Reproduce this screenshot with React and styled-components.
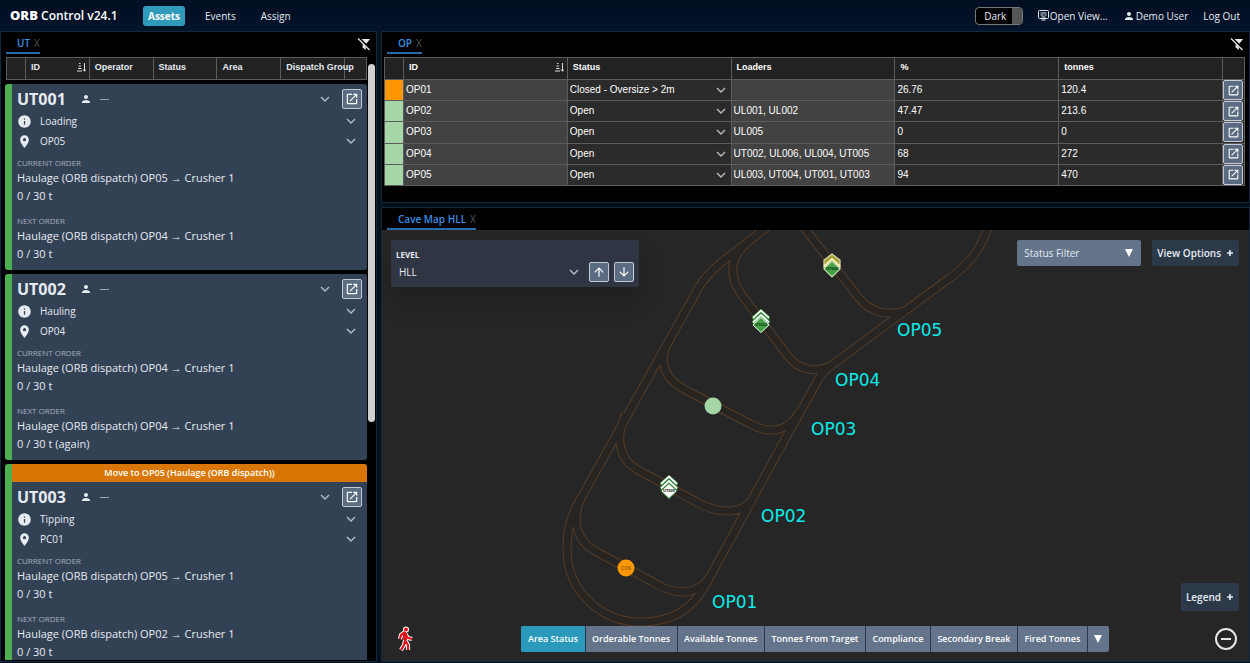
import React from 'react';
import styled, { createGlobalStyle, css } from 'styled-components';
import {
  MdPerson,
  MdInfo,
  MdLocationOn,
  MdOpenInNew,
  MdArrowUpward,
  MdArrowDownward,
} from 'react-icons/md';

const ui = '"Open Sans", "Noto Sans", sans-serif';
const grid = '"Liberation Sans", Arial, sans-serif';

const Global = createGlobalStyle`
  *, *::before, *::after { box-sizing: border-box; }
  body { margin: 0; background: #04101c; color: #e6ebf2; font: 10px/16px ${ui}; }
  button, select, input { font: inherit; color: inherit; margin: 0; }
  h2, h3, p { margin: 0; font: inherit; }
  svg { display: block; flex: none; }
`;

const Shell = styled.div`
  height: 100vh;
  display: flex;
  flex-direction: column;
  overflow: hidden;
`;

const TopBar = styled.header`
  flex: 0 0 31px;
  display: flex;
  align-items: center;
  padding: 0 10px;
  background: linear-gradient(#020e22, #03142b);
`;

const Brand = styled.div`
  font-size: 12px;
  font-weight: 600;
  width: 133px;
  white-space: nowrap;
  color: #fff;
  b { font-weight: 800; font-size: 13px; }
`;

const Nav = styled.nav`
  display: flex;
  flex: 1;
  gap: 15px;
`;

const NavLink = styled.a`
  padding: 0 5px;
  line-height: 20px;
  border-radius: 3px;
  text-decoration: none;
  color: #e6ebf2;
  ${(p) => p.$active && css`
    background: #2f9aba;
    color: #fff;
    font-weight: 700;
  `}
`;

const Account = styled.div`
  display: flex;
  align-items: center;
  gap: 15px;
`;

const TextButton = styled.button`
  display: flex;
  align-items: center;
  gap: 1px;
  padding: 0;
  border: 0;
  background: none;
  white-space: nowrap;
`;

const ThemeSwitch = styled.button`
  display: flex;
  width: 48px;
  height: 18px;
  padding: 0;
  overflow: hidden;
  border: 1px solid #777;
  border-radius: 4px;
  background: #000;
  line-height: 16px;
  span { flex: 1; padding-left: 3px; }
  i { width: 10px; background: #555; }
`;

const Workspace = styled.main`
  flex: 1;
  min-height: 0;
  display: grid;
  grid-template-columns: 377fr 869fr;
  gap: 4px;
  padding-bottom: 1px;
`;

const Column = styled.div`
  min-width: 0;
  min-height: 0;
  display: flex;
  flex-direction: column;
  gap: 4px;
`;

const Panel = styled.section`
  display: flex;
  flex-direction: column;
  min-height: 0;
  background: #000;
  border: 1px solid #12293d;
  ${(p) => p.$grow && 'flex: 1;'}
`;

const TabBar = styled.div`
  display: flex;
  flex: 0 0 22px;
  justify-content: space-between;
  align-items: flex-start;
  padding: 0 5px;
`;

const Tab = styled.div`
  display: flex;
  align-items: center;
  gap: 4px;
  height: 22px;
  padding: 1px 0 0 11px;
  font-weight: 600;
  color: #3b8fe0;
  border-bottom: 2px solid #2b6ca8;
`;

const CloseTab = styled.button`
  padding: 0;
  border: 0;
  background: none;
  font-weight: 400;
  color: #555;
`;

const IconButton = styled.button`
  display: flex;
  padding: 0;
  border: 0;
  background: none;
  margin-top: ${(p) => p.$top || 0}px;
  color: #e8e8e8;
`;

const OpenButton = styled.button`
  display: flex;
  align-items: center;
  justify-content: center;
  width: 20px;
  height: 20px;
  padding: 0;
  border: 1px solid #c3ccd8;
  border-radius: 2px;
  background: #5b6b82;
  color: #fff;
`;

const HeadTable = styled.table`
  width: 361px;
  max-width: 100%;
  margin-left: 1px;
  flex: none;
  table-layout: fixed;
  border-collapse: collapse;
  font: 700 9px/12px ${grid};
  background: #222;
  th {
    height: 22px;
    padding: 0 0 3px 5px;
    text-align: left;
    border: 1px solid #5c5c5c;
    white-space: nowrap;
  }
`;

const HeadLabel = styled.div`
  display: flex;
  justify-content: space-between;
  align-items: center;
  padding-right: 3px;
`;

const AssetBody = styled.div`
  display: flex;
  flex: 1;
  min-height: 0;
  padding: 3px 0 1px 4px;
`;

const AssetList = styled.div`
  flex: 1;
  min-width: 0;
  display: flex;
  flex-direction: column;
  gap: 4px;
  overflow: hidden;
`;

const ScrollTrack = styled.div`
  width: 9px;
  padding: 7px 1px 0;
  flex: none;
  &::before {
    content: '';
    display: block;
    height: 60%;
    border-radius: 4px;
    background: #d2d0cf;
  }
`;

const Card = styled.article`
  flex: none;
  border-left: 7px solid #4caf50;
  border-radius: 3px;
  background: #334155;
  overflow: hidden;
`;

const Banner = styled.div`
  background: #d97706;
  color: #fff;
  font-size: 9px;
  font-weight: 600;
  line-height: 18px;
  text-align: center;
`;

const CardBody = styled.div`
  padding: 5px 5px 7px;
`;

const CardHead = styled.div`
  display: grid;
  grid-template-columns: 63px 1fr auto auto;
  align-items: center;
  height: 20px;
  margin-bottom: 2px;
  h2 { font-size: 16px; font-weight: 700; line-height: 20px; }
  ${OpenButton} { margin-left: 12px; }
`;

const Operator = styled.span`
  display: flex;
  align-items: center;
  gap: 8px;
  color: #e6ebf2;
  i { width: 9px; height: 1px; background: #9aa5b4; }
`;

const Field = styled.div`
  display: flex;
  align-items: center;
  height: 20px;
  padding: 0 6px 0 0;
  span { flex: 1; padding-left: 8px; }
`;

const Order = styled.section`
  padding-top: ${(p) => p.$gap}px;
  h3 { font-size: 8px; line-height: 13px; color: #a3aebd; }
  p { font-size: 11px; line-height: 18px; white-space: nowrap; }
`;

const OpTable = styled.table`
  width: 100%;
  height: 129px;
  table-layout: fixed;
  border-collapse: collapse;
  font: 10px/12px ${grid};
  color: #fff;
  th, td { border: 1px solid #5c5c5c; padding: 0 0 0 2px; text-align: left; }
  th { height: 22px; background: #222; font-size: 9px; padding: 0 0 3px 5px; }
  td { background: #2b2b2b; white-space: nowrap; }
  td:nth-child(2), td:nth-child(4) { background: #424242; }
  td:last-child { padding: 0; }
`;

const Swatch = styled.td`
  && { background: ${(p) => p.$c}; }
`;

const SelectWrap = styled.div`
  display: flex;
  align-items: center;
  padding-right: 5px;
  select {
    flex: 1;
    min-width: 0;
    appearance: none;
    border: 0;
    padding: 0;
    background: none;
    outline: 0;
  }
`;

const OpBody = styled.div`
  padding: 3px 4px 16px 2px;
`;

const MapArea = styled.div`
  position: relative;
  flex: 1;
  min-height: 0;
  background: #262626;
  overflow: hidden;
`;

const Drawing = styled.svg`
  width: 100%;
  height: 100%;
`;

const Overlay = styled.div`
  position: absolute;
  inset: 0;
  display: flex;
  flex-direction: column;
  justify-content: space-between;
  padding: 10px 10px 9px 9px;
`;

const OverlayRow = styled.div`
  display: flex;
  align-items: flex-start;
  justify-content: ${(p) => (p.$end ? 'flex-end' : 'space-between')};
`;

const LevelBox = styled.div`
  display: flex;
  align-items: flex-end;
  gap: 5px;
  width: 248px;
  height: 47px;
  padding: 5px;
  border-radius: 2px;
  background: #2f3542;
  box-shadow: 0 14px 24px rgba(0, 0, 0, 0.2);
  > div { flex: 1; }
`;

const LevelLabel = styled.label`
  display: block;
  font-size: 8px;
  font-weight: 700;
  line-height: 14px;
`;

const LevelSelect = styled(SelectWrap)`
  height: 20px;
  padding-left: 3px;
`;

const Tools = styled.div`
  display: flex;
  gap: 11px;
`;

const FilterButton = styled.button`
  display: flex;
  justify-content: space-between;
  align-items: center;
  width: 124px;
  height: 26px;
  padding: 0 8px 0 7px;
  border: 0;
  border-radius: 2px;
  background: #64748b;
`;

const DarkButton = styled.button`
  display: flex;
  align-items: center;
  gap: 5px;
  height: ${(p) => p.$h}px;
  padding: 0 5px;
  border: 0;
  border-radius: 2px;
  background: #2c3949;
  font-weight: 600;
  white-space: nowrap;
`;

const Modes = styled.div`
  display: flex;
  border-radius: 2px;
  overflow: hidden;
`;

const Mode = styled.button`
  height: 26px;
  padding: 0 7px 0 6px;
  border: 0;
  border-left: 1px solid ${(p) => (p.$on ? '#2b9aba' : '#26384f')};
  background: ${(p) => (p.$on ? '#2b9aba' : '#64748b')};
  color: #fff;
  font-size: 9px;
  font-weight: 600;
  white-space: nowrap;
`;

const BottomRow = styled.div`
  display: grid;
  grid-template-columns: 124px 1fr auto;
  align-items: center;
  margin-top: 15px;
  padding: 0 2px 0 6px;
  ${Modes} { justify-self: start; }
`;

const Chevron = () => (
  <svg width="10" height="6" viewBox="0 0 10 6" fill="none" stroke="#b4bcc7" strokeWidth="1.4">
    <path d="M1 1l4 4 4-4" />
  </svg>
);

const SortIcon = () => (
  <svg width="9" height="9" viewBox="0 0 9 9" fill="none" stroke="#ddd" strokeWidth="1">
    <path d="M2 .5h1.500M1.500 3h2.500M1 5.500h3.500M0 8h5M7.500 0v8M6 6.500l1.500 1.800L9 6.500" />
  </svg>
);

const Triangle = () => (
  <svg width="8" height="8" viewBox="0 0 8 8" fill="#fff"><path d="M0 0h8L4 8z" /></svg>
);

const Plus = () => (
  <svg width="8" height="8" viewBox="0 0 8 8" stroke="#e6ebf2" strokeWidth="1.600"><path d="M4 1v6M1 4h6" /></svg>
);

const FilterOff = () => (
  <svg width="14" height="14" viewBox="0 0 14 14">
    <path d="M4.500 2H13L9.300 6.800z" fill="#e8e8e8" />
    <path d="M5.600 7L8.800 10.200V13L5.600 10.500z" fill="#e8e8e8" />
    <path d="M1 1.500l11.500 11.500" stroke="#e8e8e8" strokeWidth="1.300" />
  </svg>
);

const ViewIcon = () => (
  <svg width="11" height="11" viewBox="0 0 11 11" fill="none" stroke="#e6ebf2">
    <rect x=".5" y=".5" width="10" height="8" rx="1" />
    <path d="M2.500 3h6M2.500 5h3M6.500 5h2M3.500 7h4M3.500 10h4" />
  </svg>
);

const Walker = () => {
  const body = 'M8 6L4 9L3 13M8 6L8 15L7 19L4 24M8 14L11 19V24M8.500 8L11 12L15 13';
  return (
    <svg width="18" height="26" viewBox="0 0 18 26" fill="none" strokeLinejoin="round">
      <circle cx="9" cy="3.500" r="3" fill="#fff" />
      <path d={body} stroke="#fff" strokeWidth="4.200" />
      <circle cx="9" cy="3.500" r="2" fill="#e0101c" />
      <path d={body} stroke="#e0101c" strokeWidth="2.200" />
      <path d="M8 7v7" stroke="#e0101c" strokeWidth="4" />
    </svg>
  );
};

const assets = [
  { id: 'UT001', status: 'Loading', place: 'OP05', orders: [['OP05', '0 / 30 t'], ['OP04', '0 / 30 t']] },
  { id: 'UT002', status: 'Hauling', place: 'OP04', orders: [['OP04', '0 / 30 t'], ['OP04', '0 / 30 t (again)']] },
  { id: 'UT003', status: 'Tipping', place: 'PC01', banner: 'Move to OP05 (Haulage (ORB dispatch))', orders: [['OP05', '0 / 30 t'], ['OP02', '0 / 30 t']] },
];

const points = [
  ['OP01', 'Closed - Oversize > 2m', '', '26.76', '120.4'],
  ['OP02', 'Open', 'UL001, UL002', '47.47', '213.6'],
  ['OP03', 'Open', 'UL005', '0', '0'],
  ['OP04', 'Open', 'UT002, UL006, UL004, UT005', '68', '272'],
  ['OP05', 'Open', 'UL003, UT004, UT001, UT003', '94', '470'],
];

const modes = ['Area Status', 'Orderable Tonnes', 'Available Tonnes', 'Tonnes From Target', 'Compliance', 'Secondary Break', 'Fired Tonnes'];

const roads = [
  'M780 218L763 230L722 262Q702 278 694 296L580 500C568 520 567 535 567 552C568 590 600 622 640 622C670 622 690 612 705 586L784 441L817 382Q820 374 832 365L943 283C966 267 980 254 990 222',
  'M582 496C570 520 577 542 597 552L662 587C680 595 698 594 709 578',
  'M626 414C614 440 620 460 638 470L702 505C722 514 744 514 753 498',
  'M670 339C659 356 661 376 682 388L752 425C772 435 790 430 799 412',
  'M748 242C728 258 730 278 741 294L788 356C799 370 815 374 832 365',
  'M798 220L859 298C870 313 890 316 904 311',
];

const labels = [
  ['OP01', 712, 608], ['OP02', 761, 522], ['OP03', 811, 435], ['OP04', 835, 386], ['OP05', 897, 336],
];

const tones = {
  green: { back: '#2e7d32', body: '#43a047', edge: '#e8f5e9', chevron: '#f1fff1', ink: '#0d3b12' },
  white: { back: '#2e7d32', body: '#ffffff', edge: '#2e7d32', chevron: '#ffffff', ink: '#111111' },
  mixed: { back: '#a3a03c', body: '#43a047', edge: '#c8e6c9', chevron: '#fdf6c0', ink: '#0d3b12' },
};

function Truck({ x, y, tone, text }) {
  const t = tones[tone];
  return (
    <g transform={`translate(${x} ${y})`}>
      {tone === 'mixed'
        ? <path d="M0-11L8-5V4L0 12L-8 4V-5z" fill={t.back} stroke="#dcd7a8" strokeWidth="1.200" />
        : <path d="M0-12L8.500-5V4L0 12L-8.500 4V-5z" fill={t.back} />}
      {tone !== 'mixed' && <path d="M-8-3L0-10.500L8-3" fill="none" stroke={t.chevron} strokeWidth="1.800" />}
      <path d="M-8 1.500L0-6L8 1.500" fill="none" stroke={t.chevron} strokeWidth="2" />
      <path d="M0-3.500L8 4L0 11.500L-8 4z" fill={t.body} stroke={t.edge} strokeWidth="1" />
      <text y="5" textAnchor="middle" fontSize="4" fontWeight="700" fill={t.ink}>{text}</text>
    </g>
  );
}

function AssetCard({ asset }) {
  return (
    <Card>
      {asset.banner && <Banner>{asset.banner}</Banner>}
      <CardBody>
        <CardHead>
          <h2>{asset.id}</h2>
          <Operator><MdPerson size={12} /><i /></Operator>
          <Chevron />
          <OpenButton aria-label={`Open ${asset.id}`}><MdOpenInNew size={14} /></OpenButton>
        </CardHead>
        <Field><MdInfo size={15} /><span>{asset.status}</span><Chevron /></Field>
        <Field><MdLocationOn size={15} /><span>{asset.place}</span><Chevron /></Field>
        {asset.orders.map(([from, amount], i) => (
          <Order key={i} $gap={i ? 9 : 5}>
            <h3>{i ? 'NEXT ORDER' : 'CURRENT ORDER'}</h3>
            <p>Haulage (ORB dispatch) {from} → Crusher 1</p>
            <p>{amount}</p>
          </Order>
        ))}
      </CardBody>
    </Card>
  );
}

function GridColumns() {
  return (
    <colgroup>
      <col width="19" /><col /><col /><col /><col /><col /><col width="22" />
    </colgroup>
  );
}

export default function App() {
  return (
    <Shell>
      <Global />
      <TopBar>
        <Brand><b>ORB</b> Control v24.1</Brand>
        <Nav>
          <NavLink href="#assets" $active>Assets</NavLink>
          <NavLink href="#events">Events</NavLink>
          <NavLink href="#assign">Assign</NavLink>
        </Nav>
        <Account>
          <ThemeSwitch><span>Dark</span><i /></ThemeSwitch>
          <TextButton><ViewIcon />Open View...</TextButton>
          <TextButton><MdPerson size={12} />Demo User</TextButton>
          <TextButton>Log Out</TextButton>
        </Account>
      </TopBar>
      <Workspace>
        <Column>
          <Panel $grow>
            <TabBar>
              <Tab>UT<CloseTab aria-label="Close UT">X</CloseTab></Tab>
              <IconButton $top={5} aria-label="Clear filters"><FilterOff /></IconButton>
            </TabBar>
            <AssetBody>
              <AssetList>
                <HeadTable>
                  <GridColumns />
                  <thead>
                    <tr>
                      <th />
                      <th><HeadLabel>ID<SortIcon /></HeadLabel></th>
                      <th>Operator</th><th>Status</th><th>Area</th><th>Dispatch Group</th><th />
                    </tr>
                  </thead>
                </HeadTable>
                {assets.map((a) => <AssetCard key={a.id} asset={a} />)}
              </AssetList>
              <ScrollTrack />
            </AssetBody>
          </Panel>
        </Column>
        <Column>
          <Panel>
            <TabBar>
              <Tab>OP<CloseTab aria-label="Close OP">X</CloseTab></Tab>
              <IconButton $top={5} aria-label="Clear filters"><FilterOff /></IconButton>
            </TabBar>
            <OpBody>
              <OpTable>
                <GridColumns />
                <thead>
                  <tr>
                    <th />
                    <th><HeadLabel>ID<SortIcon /></HeadLabel></th>
                    <th>Status</th><th>Loaders</th><th>%</th><th>tonnes</th><th />
                  </tr>
                </thead>
                <tbody>
                  {points.map(([id, status, loaders, pct, tonnes], i) => (
                    <tr key={id}>
                      <Swatch $c={i ? '#a5d6a7' : '#ff9800'} />
                      <td>{id}</td>
                      <td>
                        <SelectWrap>
                          <select aria-label={`Status of ${id}`} defaultValue={status}><option>{status}</option></select>
                          <Chevron />
                        </SelectWrap>
                      </td>
                      <td>{loaders}</td><td>{pct}</td><td>{tonnes}</td>
                      <td><OpenButton aria-label={`Open ${id}`}><MdOpenInNew size={13} /></OpenButton></td>
                    </tr>
                  ))}
                </tbody>
              </OpTable>
            </OpBody>
          </Panel>
          <Panel $grow>
            <TabBar>
              <Tab>Cave Map HLL<CloseTab aria-label="Close Cave Map HLL">X</CloseTab></Tab>
            </TabBar>
            <MapArea>
              <Drawing viewBox="382 230 867 431" preserveAspectRatio="xMidYMid slice">
                <g fill="none" stroke="#553c26" strokeWidth="9">{roads.map((d) => <path key={d} d={d} />)}</g>
                <g fill="none" stroke="#282422" strokeWidth="7">{roads.map((d) => <path key={d} d={d} />)}</g>
                <circle cx="713" cy="406" r="8.500" fill="#a5d6a7" />
                <circle cx="626" cy="568" r="8.500" fill="#ff9800" />
                <text x="626" y="570" textAnchor="middle" fontSize="5" fill="#5a3200">COS</text>
                <Truck x={832} y={265} tone="mixed" text="UT004" />
                <Truck x={761} y={321} tone="green" text="UT002" />
                <Truck x={669} y={487} tone="white" text="UT005" />
                <g fill="#0cebe8" fontFamily="DejaVu Sans" fontSize="17">
                  {labels.map(([t, x, y]) => <text key={t} x={x} y={y}>{t}</text>)}
                </g>
              </Drawing>
              <Overlay>
                <OverlayRow>
                  <LevelBox>
                    <div>
                      <LevelLabel htmlFor="level">LEVEL</LevelLabel>
                      <LevelSelect>
                        <select id="level" defaultValue="HLL"><option>HLL</option></select>
                        <Chevron />
                      </LevelSelect>
                    </div>
                    <OpenButton aria-label="Level up"><MdArrowUpward size={14} /></OpenButton>
                    <OpenButton aria-label="Level down"><MdArrowDownward size={14} /></OpenButton>
                  </LevelBox>
                  <Tools>
                    <FilterButton>Status Filter<Triangle /></FilterButton>
                    <DarkButton $h={26}>View Options<Plus /></DarkButton>
                  </Tools>
                </OverlayRow>
                <div>
                  <OverlayRow $end>
                    <DarkButton $h={28}>Legend<Plus /></DarkButton>
                  </OverlayRow>
                  <BottomRow>
                    <Walker />
                    <Modes>
                      {modes.map((m, i) => <Mode key={m} $on={i === 0}>{m}</Mode>)}
                      <Mode aria-label="More"><Triangle /></Mode>
                    </Modes>
                    <IconButton aria-label="Zoom out">
                      <svg width="22" height="22" viewBox="0 0 22 22" fill="none" stroke="#e6e6e6" strokeWidth="2">
                        <circle cx="11" cy="11" r="10" /><path d="M6 11h10" />
                      </svg>
                    </IconButton>
                  </BottomRow>
                </div>
              </Overlay>
            </MapArea>
          </Panel>
        </Column>
      </Workspace>
    </Shell>
  );
}
